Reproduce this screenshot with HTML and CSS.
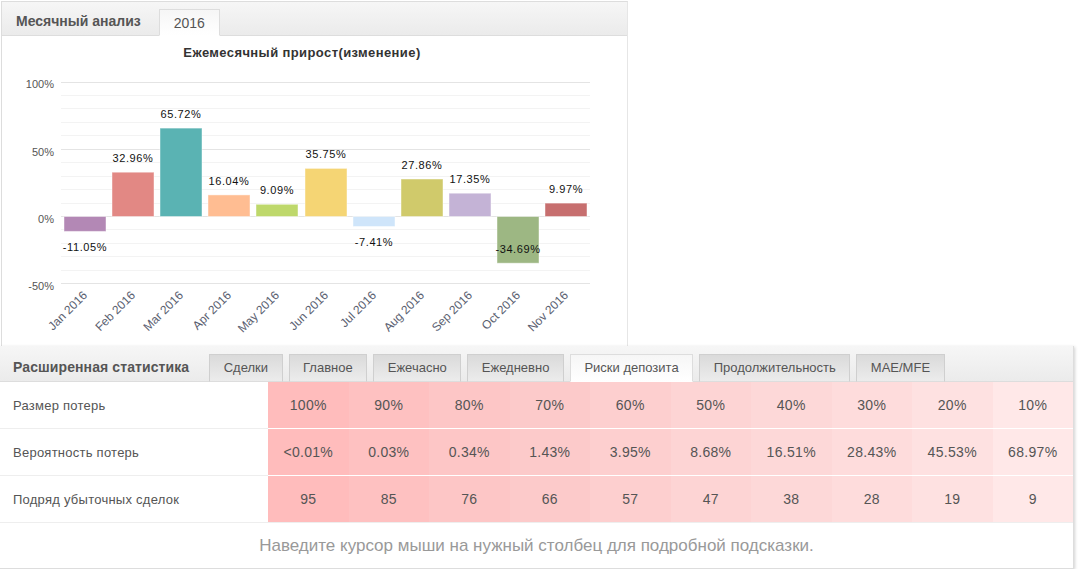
FILE: index.html
```html
<!DOCTYPE html>
<html lang="ru">
<head>
<meta charset="utf-8"/>
<meta content="width=device-width, initial-scale=1.0" name="viewport"/>
<title>Статистика счёта</title>
<link rel="stylesheet" href="styles.css">
</head>
<body>

<div class="panel monthly">
  <div class="panel-head">
    <h3>Месячный анализ</h3>
    <ul class="tabs">
      <li class="active">2016</li>
    </ul>
  </div>
  <div class="chart">
    <svg width="625" height="310" viewBox="0 0 625 310">
      <text class="chart-title" x="300" y="21" text-anchor="middle">Ежемесячный прирост(изменение)</text>

      <!-- grid, every 10% -->
      <g class="grid-minor">
        <line x1="59" x2="588" y1="59.5" y2="59.5"/>
        <line x1="59" x2="588" y1="72.5" y2="72.5"/>
        <line x1="59" x2="588" y1="86.5" y2="86.5"/>
        <line x1="59" x2="588" y1="99.5" y2="99.5"/>
        <line x1="59" x2="588" y1="126.5" y2="126.5"/>
        <line x1="59" x2="588" y1="140.5" y2="140.5"/>
        <line x1="59" x2="588" y1="153.5" y2="153.5"/>
        <line x1="59" x2="588" y1="167.5" y2="167.5"/>
        <line x1="59" x2="588" y1="193.5" y2="193.5"/>
        <line x1="59" x2="588" y1="207.5" y2="207.5"/>
        <line x1="59" x2="588" y1="220.5" y2="220.5"/>
        <line x1="59" x2="588" y1="234.5" y2="234.5"/>
      </g>
      <g class="grid-major">
        <line x1="59" x2="588" y1="46.5" y2="46.5"/>
        <line x1="59" x2="588" y1="113.5" y2="113.5"/>
        <line x1="59" x2="588" y1="180.5" y2="180.5"/>
        <line x1="59" x2="588" y1="247.5" y2="247.5"/>
      </g>
      <g class="y-labels" text-anchor="end">
        <text x="52" y="52">100%</text>
        <text x="52" y="120">50%</text>
        <text x="52" y="187">0%</text>
        <text x="52" y="254">-50%</text>
      </g>

      <!-- monthly bars -->
      <g class="bars">
        <rect x="62" y="180.5" width="42" height="14.9" fill="#b388b5"/>
        <rect x="110" y="136.2" width="42" height="44.3" fill="#e28884"/>
        <rect x="158" y="92.1" width="42" height="88.4" fill="#5ab3b3"/>
        <rect x="206" y="158.9" width="42" height="21.6" fill="#ffbd92"/>
        <rect x="254" y="168.3" width="42" height="12.2" fill="#bed86b"/>
        <rect x="303" y="132.4" width="42" height="48.1" fill="#f5d574"/>
        <rect x="351" y="180.5" width="42" height="10" fill="#cfe5fa"/>
        <rect x="399" y="143" width="42" height="37.5" fill="#d0ca6b"/>
        <rect x="447" y="157.2" width="42" height="23.3" fill="#c4b3d6"/>
        <rect x="495" y="180.5" width="42" height="46.7" fill="#9db783"/>
        <rect x="543" y="167.1" width="42" height="13.4" fill="#c76f6f"/>
      </g>
      <g class="values" text-anchor="middle">
        <text x="83" y="215">-11.05%</text>
        <text x="131" y="126">32.96%</text>
        <text x="179" y="82">65.72%</text>
        <text x="227" y="149">16.04%</text>
        <text x="275" y="158">9.09%</text>
        <text x="324" y="122">35.75%</text>
        <text x="372" y="210">-7.41%</text>
        <text x="420" y="133">27.86%</text>
        <text x="468" y="147">17.35%</text>
        <text x="516" y="217">-34.69%</text>
        <text x="564" y="157">9.97%</text>
      </g>
      <g class="x-labels" text-anchor="end">
        <text x="86" y="260" transform="rotate(-45 86 260)">Jan 2016</text>
        <text x="134" y="260" transform="rotate(-45 134 260)">Feb 2016</text>
        <text x="182" y="260" transform="rotate(-45 182 260)">Mar 2016</text>
        <text x="230" y="260" transform="rotate(-45 230 260)">Apr 2016</text>
        <text x="278" y="260" transform="rotate(-45 278 260)">May 2016</text>
        <text x="327" y="260" transform="rotate(-45 327 260)">Jun 2016</text>
        <text x="375" y="260" transform="rotate(-45 375 260)">Jul 2016</text>
        <text x="423" y="260" transform="rotate(-45 423 260)">Aug 2016</text>
        <text x="471" y="260" transform="rotate(-45 471 260)">Sep 2016</text>
        <text x="519" y="260" transform="rotate(-45 519 260)">Oct 2016</text>
        <text x="567" y="260" transform="rotate(-45 567 260)">Nov 2016</text>
      </g>
    </svg>
  </div>
</div>

<div class="panel stats">
  <div class="panel-head">
    <h3>Расширенная статистика</h3>
    <ul class="tabs">
      <li>Сделки</li>
      <li>Главное</li>
      <li>Ежечасно</li>
      <li>Ежедневно</li>
      <li class="active">Риски депозита</li>
      <li>Продолжительность</li>
      <li>MAE/MFE</li>
    </ul>
  </div>
  <table class="risk">
    <colgroup>
      <col class="label-col">
      <col class="c1"><col class="c2"><col class="c3"><col class="c4"><col class="c5">
      <col class="c6"><col class="c7"><col class="c8"><col class="c9"><col class="c10">
    </colgroup>
    <tr>
      <th>Размер потерь</th>
      <td>100%</td><td>90%</td><td>80%</td><td>70%</td><td>60%</td>
      <td>50%</td><td>40%</td><td>30%</td><td>20%</td><td>10%</td>
    </tr>
    <tr>
      <th>Вероятность потерь</th>
      <td>&lt;0.01%</td><td>0.03%</td><td>0.34%</td><td>1.43%</td><td>3.95%</td>
      <td>8.68%</td><td>16.51%</td><td>28.43%</td><td>45.53%</td><td>68.97%</td>
    </tr>
    <tr>
      <th>Подряд убыточных сделок</th>
      <td>95</td><td>85</td><td>76</td><td>66</td><td>57</td>
      <td>47</td><td>38</td><td>28</td><td>19</td><td>9</td>
    </tr>
  </table>
  <div class="hint">Наведите курсор мыши на нужный столбец для подробной подсказки.</div>
</div>

</body>
</html>
```

FILE: styles.css
```css
body {
  margin: 0;
  padding-top: 1px;
  font-family: "Liberation Sans", Arial, sans-serif;
  color: #555;
  background: #fff;
}

.panel {
  box-sizing: border-box;
  background: #fff;
}

.monthly {
  width: 627px;
  margin-left: 1px;
  border: 1px solid #ddd;
  border-right-color: #e6e6e6;
  border-bottom: 0;
}

.stats {
  width: 1074px;
  border-right: 1px solid #ddd;
  border-bottom: 1px solid #ddd;
  box-shadow: 1px 1px 3px rgba(0,0,0,0.18);
}

.panel-head {
  box-sizing: border-box;
  display: flex;
  align-items: flex-end;
  height: 34px;
  padding: 7px 0 0 13px;
  border-bottom: 1px solid #ddd;
  background: linear-gradient(#f6f6f6, #ebebeb);
}

.monthly .panel-head {
  padding-left: 14px;
}

.stats .panel-head {
  height: 36px;
  padding-top: 8px;
}

.panel-head h3 {
  margin: 0 12px 0 0;
  font-size: 14px;
  font-weight: bold;
  line-height: 27px;
  color: #555;
}

.stats .panel-head h3 {
  margin-right: 14px;
  letter-spacing: 0.1px;
}

.tabs {
  display: flex;
  margin: 0;
  padding: 0;
  list-style: none;
}

.tabs li {
  box-sizing: border-box;
  height: 28px;
  margin: 0 0 -1px 6px;
  padding: 0 14px;
  border: 1px solid #cfcfcf;
  border-bottom-color: #ddd;
  background: linear-gradient(#dadada, #ececec);
  font-size: 13px;
  line-height: 26px;
  color: #555;
}

.tabs li.active {
  border-color: #ddd;
  border-bottom-color: #fff;
  background: linear-gradient(#f6f6f6, #fff);
}

.monthly .tabs li {
  height: 27px;
  font-size: 14px;
}

.stats .tabs li {
  padding: 0 13.5px;
}

.chart {
  height: 310px;
}

.chart svg {
  display: block;
  font-family: "Liberation Sans", Arial, sans-serif;
}

.chart-title {
  font-size: 13px;
  font-weight: bold;
  letter-spacing: 0.4px;
  fill: #333;
}

.grid-minor line {
  stroke: #f3f3f3;
  stroke-width: 1;
}

.grid-major line {
  stroke: #e4e4e4;
  stroke-width: 1;
}

.y-labels text {
  font-size: 11px;
  fill: #555;
}

.bars rect {
  stroke: #fff;
  stroke-opacity: 0.45;
  stroke-width: 1;
}

.values text {
  font-size: 11px;
  letter-spacing: 0.6px;
  fill: #111;
}

.x-labels text {
  font-size: 12px;
  fill: #5a6070;
}

/* risk table */
.risk {
  width: 100%;
  border-collapse: collapse;
  table-layout: fixed;
  font-size: 13px;
}

.risk .label-col {
  width: 268px;
}

.risk th,
.risk td {
  height: 46px;
  padding: 0;
  border-bottom: 1px solid #fff;
  font-weight: normal;
  color: #555;
}

.risk th {
  padding-left: 13px;
  text-align: left;
  letter-spacing: 0.25px;
  border-bottom-color: #eee;
}

.risk td {
  text-align: center;
  font-size: 14px;
  letter-spacing: 0.3px;
}

.risk tr:last-child th,
.risk tr:last-child td {
  border-bottom-color: #eee;
}

.c1 { background: #ffbcbc; }
.c2 { background: #fec1c1; }
.c3 { background: #fdc6c6; }
.c4 { background: #fccaca; }
.c5 { background: #fdcfcf; }
.c6 { background: #fdd4d4; }
.c7 { background: #fdd8d8; }
.c8 { background: #fedcdc; }
.c9 { background: #fee1e1; }
.c10 { background: #ffe8e8; }

.hint {
  height: 45px;
  line-height: 45px;
  text-align: center;
  font-size: 17px;
  color: #999;
}
```
